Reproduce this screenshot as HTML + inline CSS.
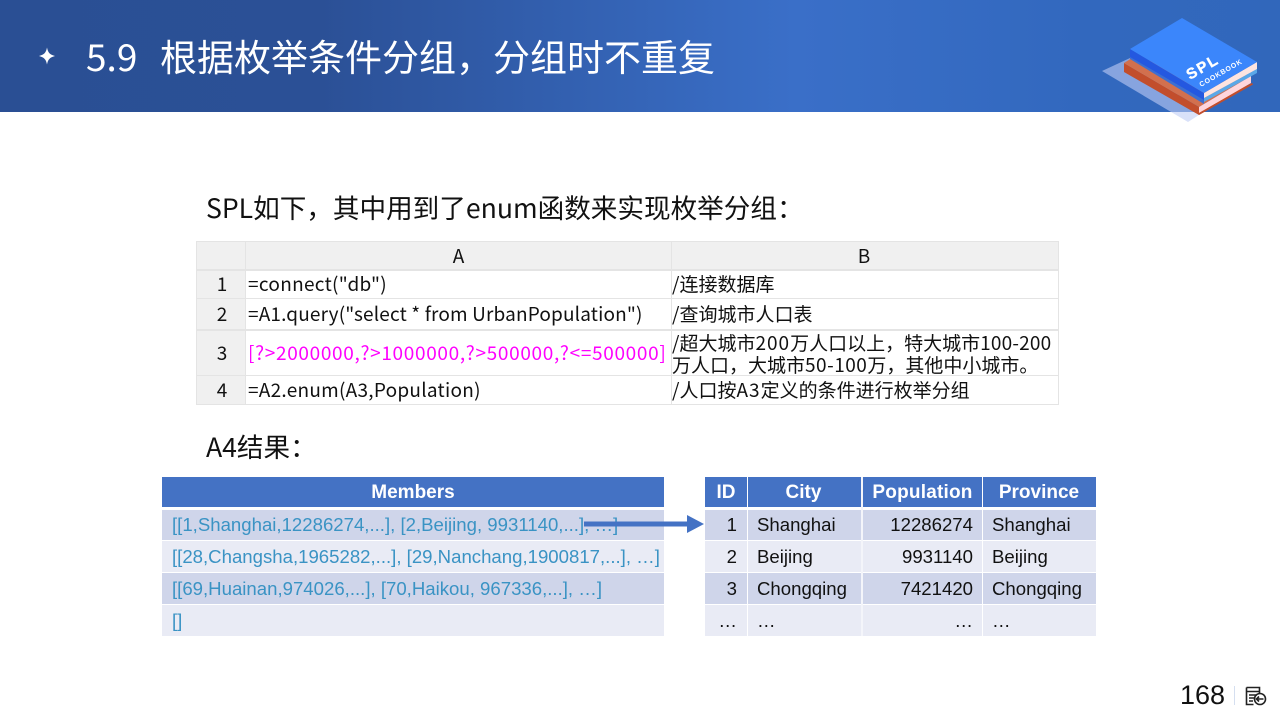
<!DOCTYPE html>
<html><head><meta charset="utf-8"><style>
html,body{margin:0;padding:0;background:#fff}
#p{position:relative;width:1280px;height:720px;overflow:hidden;background:#fff;font-family:"Noto Sans CJK SC","Liberation Sans",sans-serif;color:#111}
.t{position:absolute;white-space:nowrap}
.b{position:absolute}
.s{font-size:19px;line-height:24px;letter-spacing:0}
.a{font-family:"Liberation Sans",sans-serif;font-size:18.6px;line-height:24px;white-space:nowrap;position:absolute}
.h{font-weight:bold;color:#fff;text-align:center;font-size:19px}
.m{color:#3a93c4}
.r{text-align:right}
.l{position:absolute;background:#e4e4e4}
</style></head><body><div id="p">
<div class="b" style="left:0;top:0;width:1280px;height:112px;background:linear-gradient(90deg,#2a4f94 0%,#2b5096 25%,#3a6fc8 62%,#3268be 85%,#3167bb 100%)"></div>
<svg class="b" style="left:36px;top:46px" width="22" height="20" viewBox="0 0 22 20"><path d="M11 1.500 C12 6.500 13.500 8.500 19 10 C13.500 11.500 12 13.500 11 18.500 C10 13.500 8.500 11.500 3 10 C8.500 8.500 10 6.500 11 1.500Z" fill="#fff"/></svg>
<div class="t" style="left:86px;top:28px;font-size:37px;line-height:54px;color:#fff">5.9</div>
<div class="t" style="left:160px;top:28px;font-size:37px;line-height:54px;color:#fff">根据枚举条件分组&#xFF0C;分组时不重复</div>
<svg class="b" style="left:1080px;top:0" width="200" height="130" viewBox="0 0 200 130">
<path d="M22 71 L50 58 L122 113 L108 122Z" fill="#c0cdf5" opacity=".6"/>
<path d="M44 63 L119 107 L172 83 L119 115 L44 72Z" fill="#c24e2c"/>
<path d="M44 63 L52 58 L171 76 L119 107Z" fill="#d2704e"/>
<path d="M119 107 L171 76 L171 83 L119 113Z" fill="#ffd5db"/>
<path d="M119 113 L172 83 L173 84.500 L119 115Z" fill="#c24e2c"/>
<path d="M50 55 L124 98 L124 104 L50 59Z" fill="#3d6fd0"/>
<path d="M124 98 L177 69 L177 73 L124 102Z" fill="#5aa8e8"/>
<path d="M50 49 L50 57 L124 100 L124 93Z" fill="#2458e0"/>
<path d="M124 93 L177 62 L177 69 L124 98Z" fill="#fde4e0"/>
<path d="M50 49 L102 18 L177 62 L124 93Z" fill="#3b86fb"/>
<text transform="translate(110 80) rotate(-30)" font-family="Liberation Sans" font-weight="bold" font-size="15" letter-spacing="2" fill="#fff" stroke="#fff" stroke-width=".4">SPL</text>
<text transform="translate(121 87) rotate(-30)" font-family="Liberation Sans" font-weight="bold" font-size="7" letter-spacing=".8" fill="#fff">COOKBOOK</text>
</svg>
<div class="t" style="left:206px;top:187px;font-size:26.6px;line-height:40px">SPL如下&#xFF0C;其中用到了enum函数来实现枚举分组&#xFF1A;</div>
<div class="t" style="left:206px;top:426px;font-size:26.6px;line-height:40px">A4结果&#xFF1A;</div>

<!-- sheet -->
<div class="b" style="left:196px;top:241px;width:863px;height:29px;background:#f0f0f0"></div>
<div class="b" style="left:196px;top:241px;width:50px;height:164px;background:#f0f0f0"></div>
<div class="l" style="left:196px;top:241px;width:863px;height:1px"></div>
<div class="l" style="left:196px;top:269px;width:863px;height:2px"></div>
<div class="l" style="left:196px;top:298px;width:863px;height:1px"></div>
<div class="l" style="left:196px;top:329px;width:863px;height:2px"></div>
<div class="l" style="left:196px;top:375px;width:863px;height:1px"></div>
<div class="l" style="left:196px;top:404px;width:863px;height:1px"></div>
<div class="l" style="left:196px;top:241px;width:1px;height:164px"></div>
<div class="l" style="left:245px;top:241px;width:1px;height:164px"></div>
<div class="l" style="left:671px;top:241px;width:1px;height:164px"></div>
<div class="l" style="left:1058px;top:241px;width:1px;height:164px"></div>
<div class="t s" style="left:246px;width:425px;text-align:center;top:244px">A</div>
<div class="t s" style="left:671px;width:386px;text-align:center;top:244px">B</div>
<div class="t s" style="left:198px;width:48px;text-align:center;top:272px">1</div>
<div class="t s" style="left:198px;width:48px;text-align:center;top:302px">2</div>
<div class="t s" style="left:198px;width:48px;text-align:center;top:341px">3</div>
<div class="t s" style="left:198px;width:48px;text-align:center;top:378px">4</div>
<div class="t s" style="left:248px;top:272px;letter-spacing:.3px">=connect("db")</div>
<div class="t s" style="left:248px;top:302px;letter-spacing:.15px">=A1.query("select * from UrbanPopulation")</div>
<div class="t s" style="left:248px;top:341px;color:#f0f;letter-spacing:.67px">[?&gt;2000000,?&gt;1000000,?&gt;500000,?&lt;=500000]</div>
<div class="t s" style="left:248px;top:378px;letter-spacing:.26px">=A2.enum(A3,Population)</div>
<div class="t s" style="left:672px;top:272px">/连接数据库</div>
<div class="t s" style="left:672px;top:302px">/查询城市人口表</div>
<div class="t s" style="left:672px;top:331px">/超大城市<span style="letter-spacing:1px">200</span>万人口以上&#xFF0C;特大城市<span style="letter-spacing:.2px">100-200</span></div>
<div class="t s" style="left:672px;top:353px">万人口&#xFF0C;大城市<span style="letter-spacing:.5px">50-100</span>万&#xFF0C;其他中小城市。</div>
<div class="t s" style="left:672px;top:378px">/人口按<span style="letter-spacing:1px">A3</span>定义的条件进行枚举分组</div>

<!-- members -->
<div class="b" style="left:162px;top:477px;width:502px;height:30px;background:#4472c4"></div>
<div class="b" style="left:162px;top:510px;width:502px;height:30px;background:#cfd5ea"></div>
<div class="b" style="left:162px;top:541px;width:502px;height:31px;background:#e9ebf5"></div>
<div class="b" style="left:162px;top:573px;width:502px;height:31px;background:#cfd5ea"></div>
<div class="b" style="left:162px;top:605px;width:502px;height:31px;background:#e9ebf5"></div>
<div class="a h" style="left:162px;width:502px;top:481px">Members</div>
<div class="a m" style="left:172px;top:513px">[[1,Shanghai,12286274,...], [2,Beijing, 9931140,...], …]</div>
<div class="a m" style="left:172px;top:545px">[[28,Changsha,1965282,...], [29,Nanchang,1900817,...], …]</div>
<div class="a m" style="left:172px;top:577px">[[69,Huainan,974026,...], [70,Haikou, 967336,...], …]</div>
<div class="a m" style="left:172px;top:609px">[]</div>

<!-- right table -->
<div class="b" style="left:705px;top:477px;width:391px;height:30px;background:#4472c4"></div>
<div class="b" style="left:705px;top:510px;width:391px;height:30px;background:#cfd5ea"></div>
<div class="b" style="left:705px;top:541px;width:391px;height:31px;background:#e9ebf5"></div>
<div class="b" style="left:705px;top:573px;width:391px;height:31px;background:#cfd5ea"></div>
<div class="b" style="left:705px;top:605px;width:391px;height:31px;background:#e9ebf5"></div>
<div class="b" style="left:747px;top:477px;width:1px;height:159px;background:#fff"></div>
<div class="b" style="left:861px;top:477px;width:2px;height:159px;background:#f4f5fa"></div>
<div class="b" style="left:982px;top:477px;width:1px;height:159px;background:#fff"></div>

<div class="a h" style="left:705px;width:42px;top:481px">ID</div>
<div class="a h" style="left:747px;width:113px;top:481px">City</div>
<div class="a h" style="left:863px;width:119px;top:481px;letter-spacing:.2px">Population</div>
<div class="a h" style="left:983px;width:112px;top:481px">Province</div>

<div class="a r" style="left:705px;width:32px;top:513px">1</div>
<div class="a r" style="left:705px;width:32px;top:545px">2</div>
<div class="a r" style="left:705px;width:32px;top:577px">3</div>
<div class="a r" style="left:705px;width:32px;top:609px">…</div>
<div class="a" style="left:757px;top:513px">Shanghai</div>
<div class="a" style="left:757px;top:545px">Beijing</div>
<div class="a" style="left:757px;top:577px">Chongqing</div>
<div class="a" style="left:757px;top:609px">…</div>
<div class="a r" style="left:863px;width:110px;top:513px">12286274</div>
<div class="a r" style="left:863px;width:110px;top:545px">9931140</div>
<div class="a r" style="left:863px;width:110px;top:577px">7421420</div>
<div class="a r" style="left:863px;width:110px;top:609px">…</div>
<div class="a" style="left:992px;top:513px">Shanghai</div>
<div class="a" style="left:992px;top:545px">Beijing</div>
<div class="a" style="left:992px;top:577px">Chongqing</div>
<div class="a" style="left:992px;top:609px">…</div>

<svg class="b" style="left:580px;top:510px" width="130" height="30" viewBox="0 0 130 30"><path d="M4 11.500 H107 V5 L124 14 L107 23 V16.500 H4Z" fill="#4472c4"/></svg>

<div class="t" style="left:1180px;top:678px;font-family:'Liberation Sans',sans-serif;font-size:27px;line-height:34px;color:#111">168</div>
<div class="b" style="left:1234px;top:686px;width:1px;height:19px;background:#d5dff0"></div>
<svg class="b" style="left:1244px;top:684px" width="26" height="24" viewBox="0 0 26 24" fill="none" stroke="#222"><path d="M2.500 3.500 H15.500 V9 M2.500 3.500 V20.500 H9.500 M2.500 7.500 H15.500 M5 11 H13 M5 14 H10 M5 17 H9" stroke-width="1.600"/><circle cx="16" cy="15" r="5.500" stroke-width="1.600"/><path d="M19.500 15 H12.500 M15 12.500 L12.500 15 L15 17.500" stroke-width="1.600"/></svg>
</div></body></html>
